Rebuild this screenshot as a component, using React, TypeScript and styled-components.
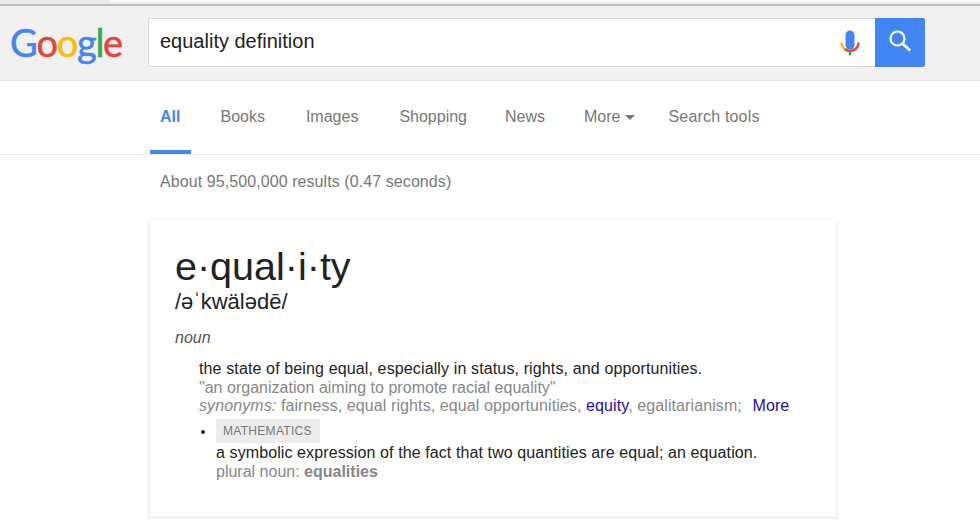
import React from "react";
import styled, { createGlobalStyle } from "styled-components";

const GlobalStyle = createGlobalStyle`
  html, body {
    margin: 0;
    padding: 0;
    background: #fff;
    overflow: hidden;
  }
  body {
    font-family: "Liberation Sans", Arial, sans-serif;
  }
`;

const Page = styled.div`
  width: 980px;
  height: 520px;
  overflow: hidden;
  background: #fff;
`;

const WindowEdge = styled.div`
  height: 6px;
  box-sizing: border-box;
  background: #ececec;
  border-bottom: 2px solid #bdbdbd;
  padding-left: 110px;
`;

const WindowTab = styled.div`
  height: 2px;
  background: #fafafa;
`;

const Header = styled.header`
  height: 75px;
  box-sizing: border-box;
  background: #f1f1f1;
  border-bottom: 1px solid #e6e6e6;
  display: flex;
  padding: 12px 0 0 10px;
`;

const Logo = styled.div`
  width: 138px;
  height: 49px;
  display: flex;
  align-items: center;
  font-family: Lato, sans-serif;
  font-size: 38px;
  letter-spacing: -1.3px;
  line-height: 49px;
  -webkit-text-stroke: 0.5px;
`;

const LogoLetter = styled.span<{ $c: string }>`
  color: ${(p) => p.$c};
`;

const SearchBox = styled.div`
  width: 727px;
  height: 49px;
  box-sizing: border-box;
  background: #fff;
  border: 1px solid #d9d9d9;
  border-right: none;
  display: flex;
  align-items: center;
  justify-content: space-between;
  padding: 0 15px 0 11px;
`;

const Query = styled.span`
  font-size: 20px;
  color: #222;
  margin-top: -3px;
`;

const SearchButton = styled.button`
  width: 50px;
  height: 49px;
  border: none;
  padding: 0 0 3px;
  background: #4285f4;
  border-radius: 0 2px 2px 0;
  display: flex;
  align-items: center;
  justify-content: center;
`;

const Tabs = styled.nav`
  height: 74px;
  box-sizing: border-box;
  border-bottom: 1px solid #ebebeb;
  padding-left: 150px;
  display: flex;
`;

const Tab = styled.a<{ $active?: boolean; $after?: number }>`
  height: 73px;
  box-sizing: border-box;
  padding: 2px ${(p) => (p.$active ? 11 : 10)}px 0 10px;
  margin-right: ${(p) => p.$after ?? 20}px;
  display: flex;
  align-items: center;
  gap: 5px;
  font-size: 16px;
  font-weight: ${(p) => (p.$active ? 700 : 400)};
  color: ${(p) => (p.$active ? "#4285f4" : "#777")};
  border-bottom: 4px solid ${(p) => (p.$active ? "#4285f4" : "transparent")};
`;

const MoreTab = styled(Tab)`
  margin-left: -1px;
`;

const ToolsTab = styled(Tab)`
  letter-spacing: 0.18px;
`;

const Caret = styled.span`
  width: 0;
  height: 0;
  border-left: 5px solid transparent;
  border-right: 5px solid transparent;
  border-top: 5px solid #777;
  margin-top: 2px;
`;

const Content = styled.main`
  padding: 18px 0 0 150px;
`;

const Stats = styled.div`
  padding-left: 10px;
  font-size: 16px;
  line-height: 18px;
  letter-spacing: 0.08px;
  color: #777;
`;

const Card = styled.section`
  margin-top: 29px;
  width: 686px;
  height: 340px;
  box-sizing: border-box;
  background: #fff;
  box-shadow: 0 1px 4px rgba(0, 0, 0, 0.16);
`;

const CardBody = styled.div`
  height: 298px;
  box-sizing: border-box;
  padding: 23px 25px 0;
  border-bottom: 1px solid #e6e6e6;
`;

const Word = styled.h1`
  margin: 0;
  font-size: 39.500px;
  font-weight: 400;
  line-height: 46px;
  color: #222;
`;

const Phonetic = styled.div`
  margin-top: 1px;
  font-size: 22px;
  line-height: 24px;
  color: #222;
`;

const PartOfSpeech = styled.div`
  margin-top: 15px;
  font-size: 16px;
  font-style: italic;
  line-height: 18px;
  color: #555;
`;

const Sense = styled.div`
  margin: 13px 0 0 24px;
  font-size: 16px;
  line-height: 18.500px;
  color: #222;
`;

const Definition = styled.div`
  letter-spacing: 0.13px;
`;

const Example = styled.div`
  color: #878787;
  letter-spacing: 0.02px;
`;

const Synonyms = styled.div`
  color: #878787;
  letter-spacing: 0.1px;
`;

const Muted = styled.div`
  color: #878787;
`;

const Label = styled.i`
  color: #878787;
`;

const Link = styled.a<{ $more?: boolean }>`
  color: #1a0dab;
  margin-left: ${(p) => (p.$more ? 6 : 0)}px;
`;

const SubSense = styled.div`
  position: relative;
  margin: 3px 0 0 41px;
  font-size: 16px;
  line-height: 19px;
  color: #222;

  &::before {
    content: "";
    position: absolute;
    left: -15px;
    top: 11px;
    width: 4px;
    height: 4px;
    border-radius: 50%;
    background: #222;
  }
`;

const Domain = styled.span`
  display: block;
  width: fit-content;
  height: 24px;
  line-height: 24px;
  padding: 0 8px 0 7px;
  background: #ececec;
  color: #777;
  font-size: 12px;
  letter-spacing: 0.3px;
`;

const Strong = styled.b`
  font-weight: 700;
`;

const SubDefinition = styled.div`
  letter-spacing: 0.1px;
`;

const MicIcon = () => (
  <svg width="20" height="26" viewBox="0 0 20 26" fill="none">
    <rect x="5.500" y="0.500" width="9" height="19" rx="4.500" fill="#4285f4" />
    <path d="M1.500 12.500a8.500 8.500 0 0 0 3.200 6.500" stroke="#fbbc05" strokeWidth="2.500" />
    <path d="M4.700 19a8.500 8.500 0 0 0 13.800-6.500" stroke="#ea4335" strokeWidth="2.500" />
    <rect x="8.800" y="21" width="2.400" height="4.500" fill="#34a853" />
  </svg>
);

const SearchIcon = () => (
  <svg width="22" height="22" viewBox="0 0 22 22" fill="none" stroke="#fff">
    <circle cx="8.500" cy="8.500" r="7" strokeWidth="2.200" />
    <path d="M13.500 13.500L21 20.500" strokeWidth="2.800" />
  </svg>
);

export default function App() {
  return (
    <Page>
      <GlobalStyle />
      <WindowEdge>
        <WindowTab />
      </WindowEdge>
      <Header>
        <Logo>
          <LogoLetter $c="#4285f4">G</LogoLetter>
          <LogoLetter $c="#ea4335">o</LogoLetter>
          <LogoLetter $c="#fbbc05">o</LogoLetter>
          <LogoLetter $c="#4285f4">g</LogoLetter>
          <LogoLetter $c="#34a853">l</LogoLetter>
          <LogoLetter $c="#ea4335">e</LogoLetter>
        </Logo>
        <SearchBox>
          <Query>equality definition</Query>
          <MicIcon />
        </SearchBox>
        <SearchButton>
          <SearchIcon />
        </SearchButton>
      </Header>
      <Tabs>
        <Tab $active $after={19}>All</Tab>
        <Tab $after={21}>Books</Tab>
        <Tab $after={21}>Images</Tab>
        <Tab $after={18}>Shopping</Tab>
        <Tab>News</Tab>
        <MoreTab $after={13}>
          More <Caret />
        </MoreTab>
        <ToolsTab>Search tools</ToolsTab>
      </Tabs>
      <Content>
        <Stats>About 95,500,000 results (0.47 seconds)</Stats>
        <Card>
          <CardBody>
            <Word>e·qual·i·ty</Word>
            <Phonetic>/əˈkwälədē/</Phonetic>
            <PartOfSpeech>noun</PartOfSpeech>
            <Sense>
              <Definition>
                the state of being equal, especially in status, rights, and opportunities.
              </Definition>
              <Example>"an organization aiming to promote racial equality"</Example>
              <Synonyms>
                <Label>synonyms:</Label> fairness, equal rights, equal opportunities,{" "}
                <Link>equity</Link>, egalitarianism; <Link $more>More</Link>
              </Synonyms>
            </Sense>
            <SubSense>
              <Domain>MATHEMATICS</Domain>
              <SubDefinition>
                a symbolic expression of the fact that two quantities are equal; an equation.
              </SubDefinition>
              <Muted>
                plural noun: <Strong>equalities</Strong>
              </Muted>
            </SubSense>
          </CardBody>
        </Card>
      </Content>
    </Page>
  );
}
